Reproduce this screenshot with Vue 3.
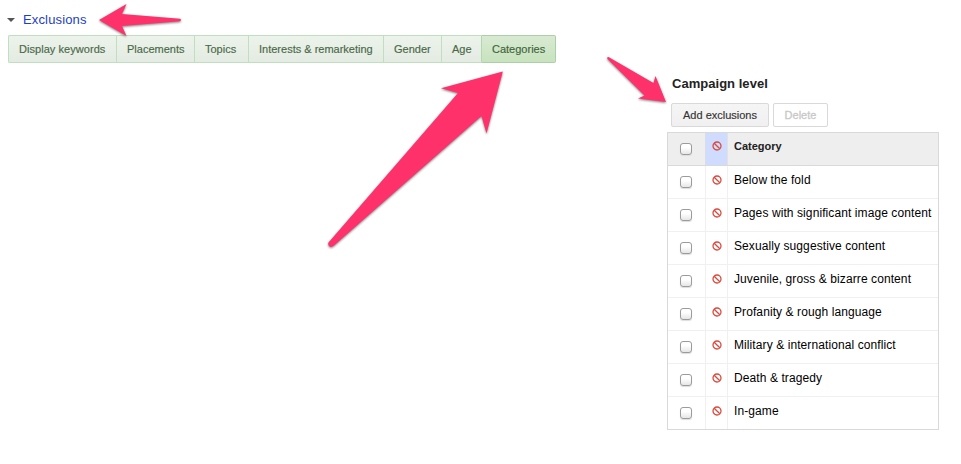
<script setup>
const tabs = ['Display keywords', 'Placements', 'Topics', 'Interests & remarketing', 'Gender', 'Age', 'Categories']
const categories = [
  'Below the fold',
  'Pages with significant image content',
  'Sexually suggestive content',
  'Juvenile, gross & bizarre content',
  'Profanity & rough language',
  'Military & international conflict',
  'Death & tragedy',
  'In-game',
]
const rows = [{ label: 'Category', head: true }, ...categories.map((label) => ({ label, head: false }))]
</script>

<template>
  <main class="page">
    <section class="left">
      <header class="title">
        <span class="caret"></span>
        <a class="link">Exclusions</a>
      </header>
      <nav class="tabs">
        <div v-for="(t, i) in tabs" :key="t" class="tab" :class="{ active: i === tabs.length - 1 }"><span>{{ t }}</span></div>
      </nav>
    </section>

    <section class="right">
      <h2 class="heading">Campaign level</h2>
      <div class="buttons">
        <button class="btn add">Add exclusions</button>
        <button class="btn delete" disabled>Delete</button>
      </div>
      <div class="table">
        <div v-for="r in rows" :key="r.label" class="row" :class="{ head: r.head }">
          <div class="cell check"><input type="checkbox" class="box" /></div>
          <div class="cell status">
            <svg class="ban" width="10" height="10" viewBox="0 0 10 10">
              <circle cx="5" cy="5" r="4" />
              <path d="M2.200 2.200L7.800 7.800" />
            </svg>
          </div>
          <div class="cell name">{{ r.label }}</div>
        </div>
      </div>
    </section>

    <svg class="arrows" width="961" height="464" viewBox="0 0 961 464">
      <path d="M99 20L126.500 4L122 14L180 18.800Q182 20 180 21.200L122 26L126.500 36Z" />
      <path d="M502.800 71.500L441 88.300L458 93L328.500 242.500Q327.500 245.500 330 246.800Q332 247.300 334 245.500L481.500 116L486.500 133.500Z" />
      <path d="M666 102L655.500 76L653.500 83L608.500 57Q606.500 57 607.500 59L644.500 95.500L638 98.500Z" />
    </svg>
  </main>
</template>

<style>
body { margin: 0; background: #fff; }
</style>

<style scoped>
.page {
  position: relative;
  display: flex;
  width: 961px;
  height: 464px;
  overflow: hidden;
  font-family: "Liberation Sans", Arial, sans-serif;
  background: #fff;
}
.left { width: 667px; padding-left: 8px; box-sizing: border-box; }
.title { display: flex; align-items: center; height: 35px; padding-top: 4px; box-sizing: border-box; }
.caret { width: 0; border: 4px solid transparent; border-top-color: #555; border-bottom: 0; margin: 1px 7px 0 -1px; }
.link { color: #1c3fc4; font-size: 13px; letter-spacing: 0.15px; margin-left: 1px; }
.tabs {
  display: grid;
  grid-template-columns: 108px 78px 54px 135px 58px 40px 75px;
  width: 548px;
  height: 28px;
}
.tab {
  display: flex;
  align-items: center;
  padding-left: 10px;
  border: 1px solid #bfdfbe;
  border-right: 0;
  background: linear-gradient(#ebf3ea, #e3ebe2);
  color: #4a6848;
  font-size: 11px;
  white-space: nowrap;
  -webkit-text-stroke: 0.15px #4a6848;
}
.tab:first-child { border-radius: 2px 0 0 2px; letter-spacing: 0.05px; }
.tab.active {
  border: 1px solid #abcfa7;
  border-left-color: #b4d7b0;
  border-radius: 0 2px 2px 0;
  background: linear-gradient(#d8ead2, #c7e3bd);
  color: #3c623a;
}
.right { width: 272px; padding-top: 75px; }
.heading { margin: 0 0 11px 5px; font-size: 13px; line-height: 17px; letter-spacing: 0.03px; color: #222; }
.buttons { display: flex; gap: 4px; height: 24px; margin: 0 0 5px 4px; }
.btn {
  height: 24px;
  box-sizing: border-box;
  padding: 0;
  border: 1px solid #d9d9d9;
  border-radius: 2px;
  font: 11px "Liberation Sans", Arial, sans-serif;
}
.add { width: 98px; color: #333; background: linear-gradient(#f5f5f5, #f0f0f0); -webkit-text-stroke: 0.15px #333; }
.delete { width: 55px; color: #c8c8c8; background: #fff; -webkit-text-stroke: 0.3px #c8c8c8; }
.table { width: 272px; height: 298px; box-sizing: border-box; border: 1px solid #d9d9d9; }
.row { display: grid; grid-template-columns: 37px 22px 211px; height: 33px; border-bottom: 1px solid #f0f0f0; box-sizing: border-box; }
.row:last-child { height: 32px; border-bottom: 0; }
.row.head { background: #eee; border-color: #d9d9d9; }
.cell { display: flex; box-sizing: border-box; border-left: 1px solid #f0f0f0; }
.check { padding: 10px 0 0 12px; border: 0; }
.status { padding: 9px 0 0 6px; }
.name { padding: 5px 0 0 6px; font-size: 12px; line-height: 18px; letter-spacing: 0.09px; color: #000; white-space: nowrap; }
.head .status { padding-top: 8px; background: #cfdcff; border-left-color: #d9dde8; }
.head .name { font-size: 11px; font-weight: 700; letter-spacing: 0; color: #222; line-height: 17px; border-left-color: #e2e2e2; }
.box {
  appearance: none;
  width: 12px;
  height: 12px;
  margin: 0;
  border: 1px solid #9b9b9b;
  border-radius: 3px;
  background: linear-gradient(#fff 35%, #e6e6e6);
  box-shadow: 0 1px 1px #ddd;
}
.ban { fill: none; stroke: #d94b3f; stroke-width: 1.3; }
.arrows {
  position: absolute;
  inset: 0;
  pointer-events: none;
  fill: #ff316b;
  filter: drop-shadow(0 1px 1px rgba(0, 0, 0, 0.5));
}
</style>
